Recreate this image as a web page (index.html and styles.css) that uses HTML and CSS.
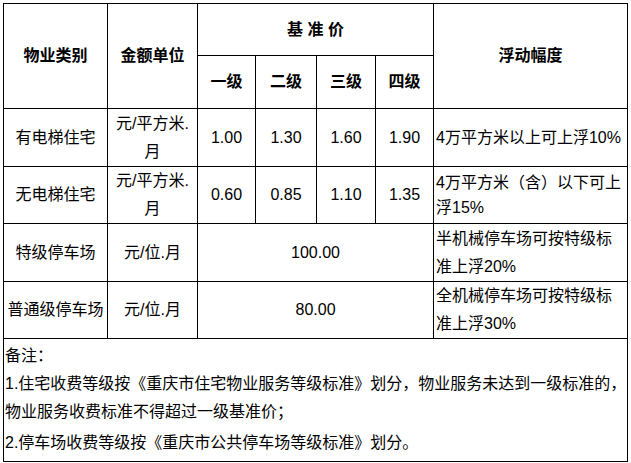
FILE: index.html
```html
<!DOCTYPE html>
<html lang="zh-CN">
<head>
<meta charset="utf-8">
<title>物业服务收费基准价</title>
<link rel="stylesheet" href="styles.css">
</head>
<body>
<table class="fee">
  <colgroup>
    <col class="c-type">
    <col class="c-unit">
    <col class="c-l1">
    <col class="c-l2">
    <col class="c-l3">
    <col class="c-l4">
    <col class="c-float">
  </colgroup>
  <tr class="h1">
    <th rowspan="2">物业类别</th>
    <th rowspan="2">金额单位</th>
    <th colspan="4">基 准 价</th>
    <th rowspan="2">浮动幅度</th>
  </tr>
  <tr class="h2">
    <th>一级</th>
    <th>二级</th>
    <th>三级</th>
    <th>四级</th>
  </tr>
  <tr class="r1">
    <td>有电梯住宅</td>
    <td>元/平方米.<br>月</td>
    <td>1.00</td>
    <td>1.30</td>
    <td>1.60</td>
    <td>1.90</td>
    <td class="float">4万平方米以上可上浮10%</td>
  </tr>
  <tr class="r2">
    <td>无电梯住宅</td>
    <td>元/平方米.<br>月</td>
    <td>0.60</td>
    <td>0.85</td>
    <td>1.10</td>
    <td>1.35</td>
    <td class="float tight">4万平方米（含）以下可上<br>浮15%</td>
  </tr>
  <tr class="r3">
    <td>特级停车场</td>
    <td>元/位.月</td>
    <td colspan="4">100.00</td>
    <td class="float">半机械停车场可按特级标<br>准上浮20%</td>
  </tr>
  <tr class="r4">
    <td class="narrow">普通级停车场</td>
    <td>元/位.月</td>
    <td colspan="4">80.00</td>
    <td class="float">全机械停车场可按特级标<br>准上浮30%</td>
  </tr>
  <tr class="r5">
    <td colspan="7" class="notes">
      <p>备注：</p>
      <p>1.住宅收费等级按《重庆市住宅物业服务等级标准》划分，物业服务未达到一级标准的，<br>物业服务收费标准不得超过一级基准价；</p>
      <p class="last">2.停车场收费等级按《重庆市公共停车场等级标准》划分。</p>
    </td>
  </tr>
</table>
</body>
</html>
```
FILE: styles.css
```css
html, body {
  margin: 0;
  padding: 0;
  background: #fff;
}

body {
  padding: 3px 0 0 3px;
  font-family: "Liberation Sans", "Noto Sans CJK SC", sans-serif;
  font-size: 16px;
  color: #000;
}

.fee {
  border-collapse: collapse;
  table-layout: fixed;
  width: 625px;
}

.c-type { width: 104px; }
.c-unit { width: 90px; }
.c-l1 { width: 58px; }
.c-l2 { width: 61px; }
.c-l3 { width: 59px; }
.c-l4 { width: 58px; }
.c-float { width: 194px; }

.fee th,
.fee td {
  border: 1px solid #000;
  padding: 0;
  text-align: center;
  vertical-align: middle;
  line-height: 28px;
  font-weight: normal;
  white-space: nowrap;
}

.fee th {
  font-weight: bold;
}

.h1 { height: 52px; }
.h2 { height: 53px; }
.r1 { height: 58px; }
.r2 { height: 57px; }
.r3 { height: 58px; }
.r4 { height: 56px; }

.fee td.float {
  text-align: left;
  padding-left: 2px;
}

.fee td.tight {
  line-height: 25px;
}

.fee td.notes {
  text-align: left;
  vertical-align: top;
  padding: 3px 0 4px 1px;
}

.notes p {
  margin: 0;
  line-height: 28px;
}

.notes p.last {
  margin-top: 3px;
}
```
